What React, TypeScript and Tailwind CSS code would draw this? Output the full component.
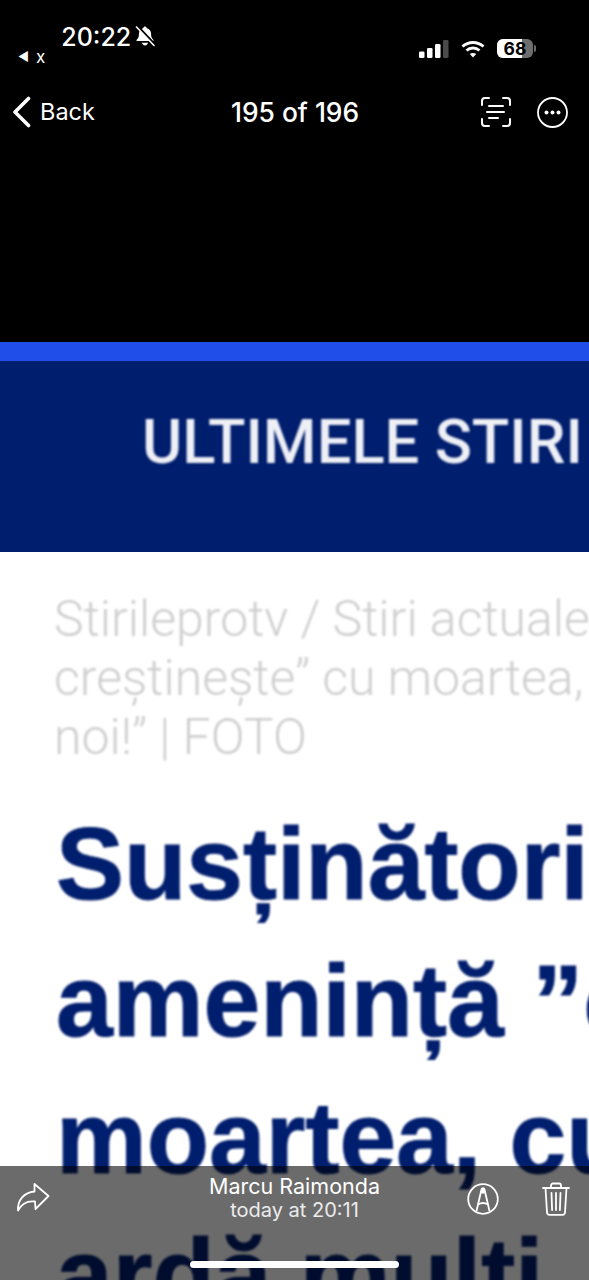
import React from "react";

function BellSlash() {
  return (
    <svg width="22" height="22" viewBox="0 0 22 22" className="shrink-0">
      <path d="M11 1.500c.9 0 1.500.6 1.600 1.400 3 .8 4.500 3.200 4.500 6.300 0 2.600.5 3.800 2.200 5.600.5.6.2 1.300-.6 1.300H3.300c-.8 0-1.100-.7-.6-1.300 1.700-1.800 2.200-3 2.200-5.600 0-3.100 1.500-5.500 4.500-6.300.1-.8.7-1.400 1.600-1.400z" fill="#fff" />
      <path d="M8 17.800h6c-.2 1.500-1.400 2.600-3 2.600s-2.800-1.100-3-2.600z" fill="#fff" />
      <path d="M3.500 1 21 19.500" stroke="#000" strokeWidth="2.200" />
      <path d="M2.500 2 20 20.500" stroke="#fff" strokeWidth="1.600" strokeLinecap="round" />
    </svg>
  );
}

function Signal() {
  return (
    <svg width="30" height="18" viewBox="0 0 30 18">
      <rect x="0" y="11.500" width="5.500" height="6.500" rx="1.200" fill="#fff" />
      <rect x="8" y="8" width="5.500" height="10" rx="1.200" fill="#fff" />
      <rect x="16" y="4" width="5.500" height="14" rx="1.200" fill="#fff" />
      <rect x="24" y="0" width="5.500" height="18" rx="1.200" fill="#4a4a4a" />
    </svg>
  );
}

function Wifi() {
  return (
    <svg width="24" height="18" viewBox="0 0 24 18" fill="none" stroke="#fff" strokeWidth="3">
      <path d="M1.500 6.500C7.500 1 16.500 1 22.500 6.500" />
      <path d="M5.500 10.500c3.800-3.400 9.200-3.400 13 0" />
      <path d="M12 17.500 8.800 14c1.900-1.500 4.500-1.500 6.400 0z" fill="#fff" stroke="none" />
    </svg>
  );
}

function Battery() {
  return (
    <div className="flex items-center">
      <div className="relative flex h-[19px] w-[36px] items-center justify-center overflow-hidden rounded-[6px] bg-[#6e6e6e]">
        <div className="absolute inset-y-0 left-0 w-[25px] bg-white" />
        <span className="relative text-[17.500px] font-bold leading-none text-black [font-family:Inter,sans-serif]">68</span>
      </div>
      <div className="ml-[1px] h-[7px] w-[2px] rounded-r-sm bg-[#6e6e6e]" />
    </div>
  );
}

function ScanText() {
  return (
    <svg width="30" height="30" viewBox="0 0 30 30" fill="none" stroke="#fff" strokeWidth="2" strokeLinecap="round">
      <path d="M1 8V4a3 3 0 0 1 3-3h4" />
      <path d="M22 1h4a3 3 0 0 1 3 3v4" />
      <path d="M29 22v4a3 3 0 0 1-3 3h-4" />
      <path d="M8 29H4a3 3 0 0 1-3-3v-4" />
      <path d="M8 9h14M6 15h17M8 21h9" />
    </svg>
  );
}

function More() {
  return (
    <svg width="31" height="31" viewBox="0 0 31 31" fill="none">
      <circle cx="15.500" cy="15.500" r="14.500" stroke="#fff" strokeWidth="1.800" />
      <circle cx="9.500" cy="15.500" r="2" fill="#fff" />
      <circle cx="15.500" cy="15.500" r="2" fill="#fff" />
      <circle cx="21.500" cy="15.500" r="2" fill="#fff" />
    </svg>
  );
}

function Share() {
  return (
    <svg width="34" height="30" viewBox="0 0 34 30" fill="none" stroke="#fff" strokeWidth="1.800" strokeLinejoin="round" strokeLinecap="round">
      <path d="M18.500 2 32.500 14 19.500 27 19 19.500C11 18.500 6 21 2 28.500 1.500 18 8 10.500 18.500 9.500z" />
    </svg>
  );
}

function Markup() {
  return (
    <svg width="32" height="34" viewBox="0 0 32 34" fill="none" stroke="#fff" strokeWidth="1.800" strokeLinejoin="round">
      <circle cx="16" cy="17" r="14.800" />
      <path d="M9.500 29 14.500 7.500c.4-1.800 2.600-1.800 3 0L22.500 29" />
      <path d="M11 22.500c3-1.800 7-1.800 10 0" />
      <path d="M14.200 11.500 15 7h2l.8 4.500z" fill="#fff" stroke="none" />
    </svg>
  );
}

function Trash() {
  return (
    <svg width="28" height="34" viewBox="0 0 28 34" fill="none" stroke="#fff" strokeWidth="1.800" strokeLinecap="round" strokeLinejoin="round">
      <path d="M1 6h26" />
      <path d="M9 6V3.500A2 2 0 0 1 11 1.500h6a2 2 0 0 1 2 2V6" />
      <path d="M3.500 6l1.500 24.500a2.500 2.500 0 0 0 2.500 2.300h13a2.500 2.500 0 0 0 2.500-2.300L24.500 6" />
      <path d="M9.500 11l.6 17M14 11v17M18.500 11l-.6 17" />
    </svg>
  );
}

export default function App() {
  return (
    <div className="relative flex h-[1280px] w-[589px] flex-col overflow-hidden bg-black text-white [font-family:Inter,'Liberation_Sans',sans-serif]">
      <header className="flex h-[342px] shrink-0 flex-col">
        <div className="flex h-[84px] shrink-0 items-start justify-between pl-[18px] pr-[53px]">
          <div className="flex items-start">
            <div className="mt-[47px] flex items-center gap-[7px] text-[17px] leading-[20px]">
              <span className="text-[12px]">◀</span>
              <span>x</span>
            </div>
            <span className="ml-[16px] mt-[21px] text-[25px] font-medium leading-[32px]">20:22</span>
            <div className="ml-[3px] mt-[25px]"><BellSlash /></div>
          </div>
          <div className="mt-[39px] flex items-center gap-[12px]">
            <Signal />
            <Wifi />
            <Battery />
          </div>
        </div>
        <nav className="relative flex h-[56px] shrink-0 items-center justify-between pl-[12px] pr-[21px]">
          <div className="flex items-center gap-[9px]">
            <svg width="19" height="32" viewBox="0 0 19 32" fill="none" stroke="#fff" strokeWidth="3.600" strokeLinecap="round" strokeLinejoin="round">
              <path d="M16.500 2.500 3 16l13.500 13.500" />
            </svg>
            <span className="text-[23.500px] leading-[32px]">Back</span>
          </div>
          <span className="absolute left-[231px] text-[26.400px] font-medium leading-[32px]">195 of 196</span>
          <div className="flex items-center gap-[26px]">
            <ScanText />
            <More />
          </div>
        </nav>
      </header>

      <main className="flex-1 overflow-hidden whitespace-nowrap bg-white">
        <div className="h-[19px] bg-[#1f4fe8]" />
        <div className="flex h-[191px] items-start bg-[#001e6e] pl-[142px] pt-[45px]">
          <span className="text-[61.500px] font-medium leading-[72px] text-[#eef0f6] blur-[1px] [font-family:Roboto,sans-serif]">ULTIMELE STIRI</span>
        </div>
        <div className="pl-[54px] pt-[38px] text-[50px] font-light leading-[59px] text-[#cfcfcf] blur-[1.2px] [font-family:Roboto,sans-serif]">
          <div>Stirileprotv / Stiri actuale</div>
          <div>creștinește” cu moartea, cu</div>
          <div>noi!” | FOTO</div>
        </div>
        <div className="pl-[56px] pt-[29px] text-[102px] font-bold leading-[137px] text-[#001e6e] blur-[1px] [-webkit-text-stroke:1px_#001e6e] [font-family:'Liberation_Sans',sans-serif]">
          <div>Susținători</div>
          <div>amenință ”cu</div>
          <div>moartea, cu</div>
          <div>ardă mulți</div>
        </div>
      </main>

      <footer className="absolute inset-x-0 bottom-0 h-[114px] bg-black/58">
        <div className="flex items-start justify-between pl-[16px] pr-[19px] pt-[16px]">
          <Share />
          <div className="absolute left-[160px] top-[8px] w-[269px] text-center leading-[24px]">
            <div className="text-[21.500px]">Marcu Raimonda</div>
            <div className="text-[20px] text-[#ececec]">today at 20:11</div>
          </div>
          <div className="flex items-start gap-[43px]">
            <Markup />
            <Trash />
          </div>
        </div>
        <div className="absolute bottom-[12px] left-[190px] h-[7px] w-[209px] rounded-full bg-white" />
      </footer>
    </div>
  );
}
